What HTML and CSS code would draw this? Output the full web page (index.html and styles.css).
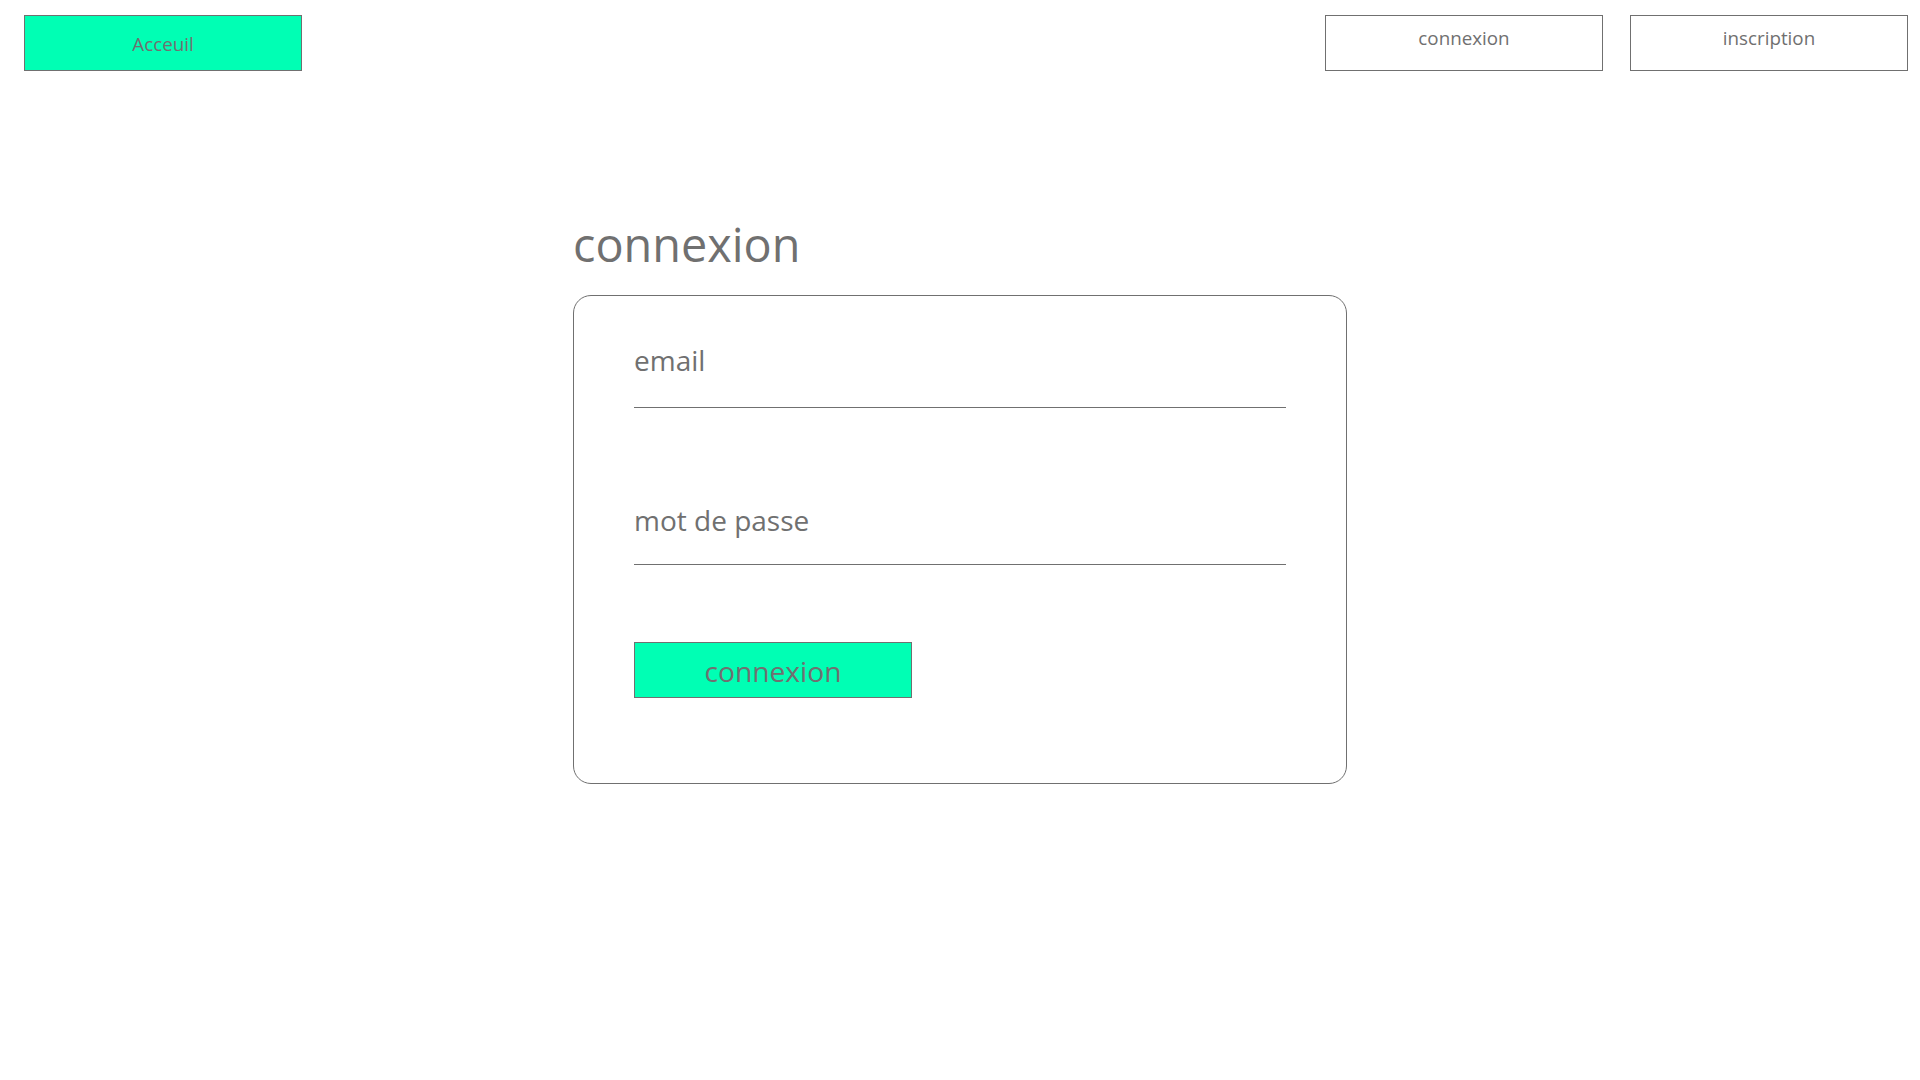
FILE: index.html
```html
<!DOCTYPE html>
<html lang="fr">
<head>
<meta charset="utf-8">
<title>connexion</title>
<link rel="stylesheet" href="styles.css">
</head>
<body>
<header class="topbar">
  <a class="nav-btn nav-home" href="#">Acceuil</a>
  <nav class="nav-right">
    <a class="nav-btn nav-plain" href="#">connexion</a>
    <a class="nav-btn nav-plain" href="#">inscription</a>
  </nav>
</header>
<main class="main">
  <h1 class="title">connexion</h1>
  <form class="card">
    <div class="field field-email"><span class="label">email</span></div>
    <div class="field field-pass"><span class="label">mot de passe</span></div>
    <button type="button" class="submit">connexion</button>
  </form>
</main>
</body>
</html>
```
FILE: styles.css
```css
html, body {
  margin: 0;
  padding: 0;
  background: #ffffff;
}
body {
  font-family: "Open Sans", "Noto Sans", "Liberation Sans", sans-serif;
  color: #707070;
}
.topbar {
  display: flex;
  justify-content: space-between;
  align-items: flex-start;
  padding: 15px 12px 0 24px;
}
.nav-right {
  display: flex;
  gap: 27px;
}
.nav-btn {
  box-sizing: border-box;
  display: block;
  width: 278px;
  height: 56px;
  border: 1px solid #707070;
  font-size: 18.8px;
  line-height: 26px;
  text-align: center;
  color: #707070;
  text-decoration: none;
}
.nav-home {
  background: #00ffb4;
  padding-top: 15px;
}
.nav-plain {
  background: #ffffff;
  padding-top: 9px;
}
.main {
  width: 774px;
  margin: 146px auto 0;
}
.title {
  margin: 0 0 23px;
  font-weight: 400;
  font-size: 46.8px;
  line-height: 55px;
  color: #707070;
}
.card {
  box-sizing: border-box;
  display: flex;
  flex-direction: column;
  align-items: flex-start;
  border: 1px solid #707070;
  border-radius: 18px;
  padding: 45px 60px 85px;
}
.field {
  align-self: stretch;
  border-bottom: 1px solid #707070;
}
.label {
  display: block;
  font-size: 28px;
  line-height: 38px;
}
.field-email {
  padding-bottom: 28px;
}
.field-pass {
  margin-top: 93px;
  padding-bottom: 25px;
}
.submit {
  box-sizing: border-box;
  margin-top: 77px;
  width: 278px;
  height: 56px;
  padding: 2px 0 0;
  border: 1px solid #707070;
  border-radius: 0;
  background: #00ffb4;
  font-family: inherit;
  font-size: 28.2px;
  line-height: 38px;
  color: #707070;
  text-align: center;
  align-self: flex-start;
}
```
